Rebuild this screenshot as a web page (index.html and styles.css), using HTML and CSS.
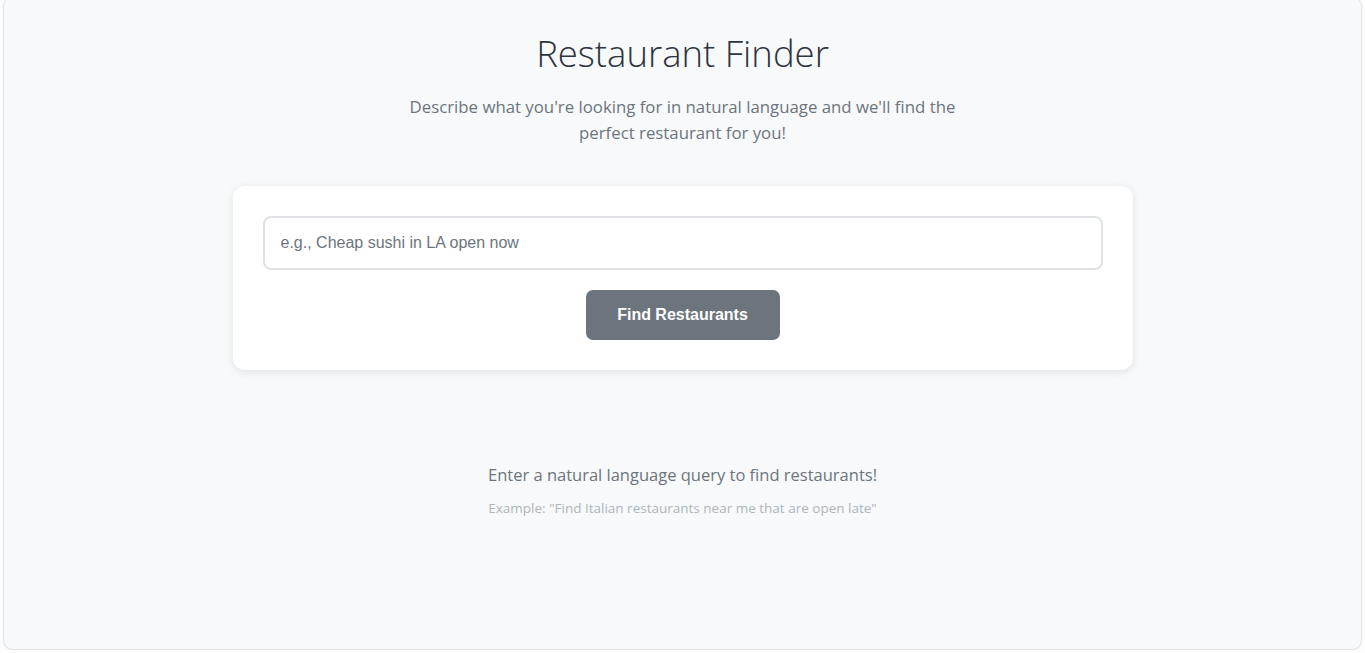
FILE: index.html
```html
<!DOCTYPE html>
<html lang="en">
<head>
<meta charset="utf-8">
<title>Restaurant Finder</title>
<link rel="stylesheet" href="styles.css">
</head>
<body>
<div class="app">
  <header class="hero">
    <h1 class="title">Restaurant Finder</h1>
    <p class="subtitle">Describe what you're looking for in natural language and we'll find the perfect restaurant for you!</p>
  </header>
  <section class="search-card">
    <input class="search-input" type="text" placeholder="e.g., Cheap sushi in LA open now">
    <button class="search-btn" type="button">Find Restaurants</button>
  </section>
  <section class="empty-state">
    <p class="empty-main">Enter a natural language query to find restaurants!</p>
    <p class="empty-example">Example: "Find Italian restaurants near me that are open late"</p>
  </section>
</div>
</body>
</html>
```

FILE: styles.css
```css
* { box-sizing: border-box; }
html, body { margin: 0; padding: 0; background: #fdfdfd; overflow: hidden; }
body {
  font-family: "Open Sans", "Noto Sans", "Liberation Sans", sans-serif;
  color: #343a40;
}
.app {
  margin: -4px 3px 0;
  height: 654px;
  background: #f8f9fa;
  border: 1px solid #e3e4e6;
  border-radius: 10px;
  box-shadow: 0 1px 2px rgba(0,0,0,0.06);
  display: flex;
  flex-direction: column;
  align-items: center;
  padding-top: 31px;
}
.hero { text-align: center; }
.title {
  margin: 0;
  font-size: 36.5px;
  font-weight: 300;
  line-height: 50px;
  color: #2c3440;
}
.subtitle {
  margin: 16px auto 0;
  max-width: 600px;
  font-size: 16.8px;
  line-height: 26px;
  color: #6c757d;
}
.search-card {
  margin-top: 40px;
  width: 900px;
  background: #fff;
  border-radius: 12px;
  box-shadow: 0 2px 8px rgba(0,0,0,0.1);
  padding: 30px;
  display: flex;
  flex-direction: column;
  align-items: center;
  gap: 20px;
}
.search-input {
  width: 100%;
  height: 54px;
  border: 2px solid #dee2e6;
  border-radius: 8px;
  padding: 0 16px;
  font-family: "Liberation Sans", Arial, sans-serif;
  font-size: 16px;
  color: #343a40;
  background: #fff;
  outline: none;
}
.search-input::placeholder { color: #6c757d; }
.search-btn {
  width: 194px;
  height: 50px;
  border: none;
  border-radius: 7px;
  background: #6c757d;
  color: #fff;
  font-family: "Liberation Sans", Arial, sans-serif;
  font-weight: bold;
  font-size: 16px;
  cursor: pointer;
}
.empty-state {
  margin-top: 93px;
  text-align: center;
}
.empty-main {
  margin: 0;
  font-size: 16.5px;
  line-height: 24px;
  color: #6c757d;
}
.empty-example {
  margin: 11px 0 0;
  font-size: 13.5px;
  line-height: 20px;
  color: #adb5bd;
}
```
